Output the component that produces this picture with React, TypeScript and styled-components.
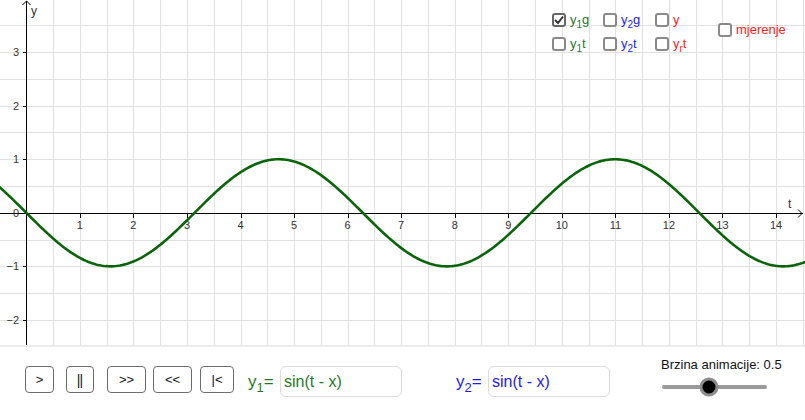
import React from "react";
import styled, { createGlobalStyle } from "styled-components";

const GlobalStyle = createGlobalStyle`
  html, body {
    margin: 0;
    padding: 0;
    background: #fff;
  }
  body {
    font-family: "Liberation Sans", Arial, sans-serif;
  }
`;

// graph geometry (px)
const W = 805;
const H = 346;
const U = 53.55;
const OX = 26.3;
const OY = 212.8;

const GREEN = "#1f7a1f";
const BLUE = "#1c1cf0";
const RED = "#ff1a1a";

const Page = styled.div`
  width: 805px;
  height: 420px;
  display: flex;
  flex-direction: column;
  overflow: hidden;
`;

const GraphArea = styled.div`
  position: relative;
  height: 345px;
  border-bottom: 2px solid #ececec;
  overflow: hidden;
`;

const Overlay = styled.div`
  position: absolute;
  left: 552px;
  top: 13px;
  display: grid;
  grid-template-columns: 51px 52px 63px auto;
  grid-template-rows: 24px 24px;
  align-items: start;
`;

const CheckItem = styled.label<{ $span?: boolean }>`
  display: flex;
  align-items: center;
  gap: 4px;
  height: 14px;
  ${(p) => (p.$span ? "grid-row: 1 / span 2; grid-column: 4; margin-top: 10px;" : "")}
`;

const Box = styled.span<{ $checked?: boolean }>`
  width: 14px;
  height: 14px;
  box-sizing: border-box;
  border: 2px solid ${(p) => (p.$checked ? "#666" : "#8a8a8a")};
  border-radius: 3px;
  background: #fff;
  display: inline-flex;
  align-items: center;
  justify-content: center;
`;

const Sym = styled.span<{ $color: string }>`
  font-size: 13px;
  color: ${(p) => p.$color};
  line-height: 14px;
  white-space: nowrap;

  sub {
    font-size: 10px;
    vertical-align: -4px;
    line-height: 0;
  }
`;

const Controls = styled.div`
  flex: 1;
  display: flex;
  align-items: flex-start;
  padding: 10px 0 0 25px;
`;

const ButtonRow = styled.div`
  display: flex;
  margin-top: 9px;
`;

const CtrlButton = styled.button<{ $w: number; $ml?: number }>`
  width: ${(p) => p.$w}px;
  height: 27px;
  margin-left: ${(p) => p.$ml ?? 0}px;
  padding: 0;
  box-sizing: border-box;
  border: 1px solid #6b6b6b;
  border-radius: 4px;
  background: #fff;
  font-family: "Liberation Sans", Arial, sans-serif;
  font-size: 13px;
  color: #111;
  display: flex;
  align-items: center;
  justify-content: center;
`;

const Bars = styled.span`
  letter-spacing: -1px;
  font-size: 14px;
  padding-right: 1px;
`;

const Field = styled.div<{ $ml: number }>`
  display: flex;
  align-items: center;
  margin-top: 9px;
  margin-left: ${(p) => p.$ml}px;
`;

const FieldLabel = styled.span<{ $color: string }>`
  font-size: 17px;
  color: ${(p) => p.$color};
  width: 32px;

  sub {
    font-size: 13px;
    vertical-align: -5px;
    line-height: 0;
  }
`;

const Input = styled.div<{ $color: string }>`
  width: 122px;
  height: 31px;
  box-sizing: border-box;
  border: 1.5px solid #dadada;
  border-radius: 6px;
  padding: 0 3px;
  display: flex;
  align-items: center;
  font-size: 16px;
  color: ${(p) => p.$color};
`;

const SliderBox = styled.div`
  margin-left: 51px;
  display: flex;
  flex-direction: column;
`;

const SliderLabel = styled.div`
  font-size: 13px;
  line-height: 15px;
  color: #111;
`;

const Track = styled.div`
  position: relative;
  width: 105px;
  height: 4px;
  margin: 13px 0 0 1px;
  border-radius: 2px;
  background: #999;
`;

const Thumb = styled.div`
  position: absolute;
  top: 50%;
  width: 19px;
  height: 19px;
  box-sizing: border-box;
  border-radius: 50%;
  border: 3px solid #8d8d8d;
  background: #000;
  transform: translate(-50%, -50%);
`;

const Graph: React.FC = () => {
  const h = U / 2;
  const vLines: number[] = [];
  for (let k = 0; OX + k * h < W; k++) vLines.push(Math.round(OX + k * h) + 0.5);
  const hLines: number[] = [];
  for (let k = -8; OY + k * h < H; k++) {
    const y = OY + k * h;
    if (y > 0) hLines.push(Math.round(y) + 0.5);
  }
  const ax = Math.round(OX) + 0.5;
  const ay = Math.round(OY) + 0.5;

  const pts: string[] = [];
  for (let px = -2; px <= W + 2; px += 2) {
    const x = (px - OX) / U;
    const y = OY + Math.sin(x) * U;
    pts.push(`${px},${y.toFixed(2)}`);
  }

  const xTicks = Array.from({ length: 14 }, (_, i) => i + 1);
  const yTicks = [3, 2, 1, -1, -2];

  return (
    <svg width={W} height={H} style={{ display: "block" }}>
      <g stroke="#e0e0e0" strokeWidth={1} shapeRendering="crispEdges">
        {vLines.map((x) => (
          <line key={`v${x}`} x1={x} y1={0} x2={x} y2={H} />
        ))}
        {hLines.map((y) => (
          <line key={`h${y}`} x1={0} y1={y} x2={W} y2={y} />
        ))}
      </g>
      <g stroke="#000" strokeWidth={1} fill="none">
        <line x1={0} y1={ay} x2={W - 2} y2={ay} shapeRendering="crispEdges" />
        <line x1={ax} y1={1} x2={ax} y2={H} shapeRendering="crispEdges" />
        <polyline points={`${W - 7},${ay - 4} ${W - 3},${ay} ${W - 7},${ay + 4}`} />
        <polyline points={`${ax - 4},${5} ${ax},${1} ${ax + 4},${5}`} />
        {xTicks.map((t) => {
          const x = Math.round(OX + t * U) + 0.5;
          return <line key={`tx${t}`} x1={x} y1={ay} x2={x} y2={ay + 4} shapeRendering="crispEdges" />;
        })}
        {yTicks.map((t) => {
          const y = Math.round(OY - t * U) + 0.5;
          return <line key={`ty${t}`} x1={ax - 4} y1={y} x2={ax} y2={y} shapeRendering="crispEdges" />;
        })}
      </g>
      <g fontFamily='"Liberation Sans", Arial, sans-serif' fontSize={11} fill="#333">
        {xTicks.map((t) => (
          <text key={`lx${t}`} x={OX + t * U} y={ay + 15} textAnchor="middle">
            {t}
          </text>
        ))}
        {yTicks.map((t) => (
          <text key={`ly${t}`} x={19} y={OY - t * U + 4} textAnchor="end">
            {t < 0 ? `\u2212${-t}` : t}
          </text>
        ))}
        <text x={19} y={OY + 4} textAnchor="end">
          0
        </text>
        <text x={31} y={15} fontSize={12}>
          y
        </text>
        <text x={788} y={208} fontSize={12}>
          t
        </text>
      </g>
      <polyline points={pts.join(" ")} fill="none" stroke="#0a640a" strokeWidth={2.6} strokeLinejoin="round" />
    </svg>
  );
};

const Check: React.FC<{ checked?: boolean; span?: boolean; children: React.ReactNode }> = ({
  checked,
  span,
  children,
}) => (
  <CheckItem $span={span}>
    <Box $checked={checked}>
      {checked && (
        <svg width="10" height="10" viewBox="0 0 10 10">
          <polyline points="1,5 4,8 9,1.5" fill="none" stroke="#333" strokeWidth="2" />
        </svg>
      )}
    </Box>
    {children}
  </CheckItem>
);

export default function App() {
  const speed = 0.5;
  const sliderMin = -4;
  const sliderMax = 6;
  const pos = ((speed - sliderMin) / (sliderMax - sliderMin)) * 100;

  return (
    <Page>
      <GlobalStyle />
      <GraphArea>
        <Graph />
        <Overlay>
          <Check checked>
            <Sym $color={GREEN}>
              y<sub>1</sub>g
            </Sym>
          </Check>
          <Check>
            <Sym $color={BLUE}>
              y<sub>2</sub>g
            </Sym>
          </Check>
          <Check>
            <Sym $color={RED}>y</Sym>
          </Check>
          <Check span>
            <Sym $color={RED}>mjerenje</Sym>
          </Check>
          <Check>
            <Sym $color={GREEN}>
              y<sub>1</sub>t
            </Sym>
          </Check>
          <Check>
            <Sym $color={BLUE}>
              y<sub>2</sub>t
            </Sym>
          </Check>
          <Check>
            <Sym $color={RED}>
              y<sub>r</sub>t
            </Sym>
          </Check>
        </Overlay>
      </GraphArea>
      <Controls>
        <ButtonRow>
          <CtrlButton $w={29}>&gt;</CtrlButton>
          <CtrlButton $w={28} $ml={12}>
            <Bars>||</Bars>
          </CtrlButton>
          <CtrlButton $w={39} $ml={13}>
            &gt;&gt;
          </CtrlButton>
          <CtrlButton $w={39} $ml={7}>
            &lt;&lt;
          </CtrlButton>
          <CtrlButton $w={34} $ml={8}>
            |&lt;
          </CtrlButton>
        </ButtonRow>
        <Field $ml={14}>
          <FieldLabel $color={GREEN}>
            y<sub>1</sub>=
          </FieldLabel>
          <Input $color={GREEN}>sin(t - x)</Input>
        </Field>
        <Field $ml={54}>
          <FieldLabel $color={BLUE}>
            y<sub>2</sub>=
          </FieldLabel>
          <Input $color={BLUE}>sin(t - x)</Input>
        </Field>
        <SliderBox>
          <SliderLabel>Brzina animacije: {speed}</SliderLabel>
          <Track>
            <Thumb style={{ left: `${pos}%` }} />
          </Track>
        </SliderBox>
      </Controls>
    </Page>
  );
}
